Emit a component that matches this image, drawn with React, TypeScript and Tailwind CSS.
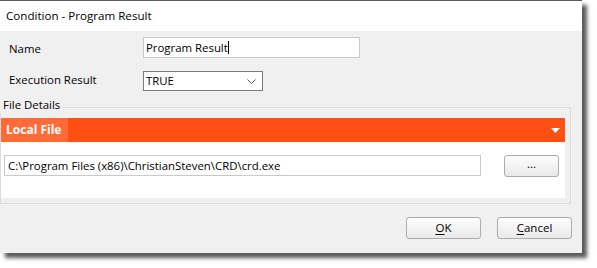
import React from "react";

const font = { fontFamily: '"Segoe UI", "Open Sans", "Noto Sans", sans-serif' };

function WinButton({ children, className = "" }: { children: React.ReactNode; className?: string }) {
  return (
    <button
      className={`h-[22px] rounded-[3px] border border-[#acacac] bg-gradient-to-b from-[#fdfdfd] to-[#e9e9ea] text-[11.5px] text-black flex items-center justify-center ${className}`}
    >
      {children}
    </button>
  );
}

export default function App() {
  return (
    <div className="w-[597px] h-[268px] bg-white overflow-hidden text-black" style={font}>
      <div className="w-[582px] h-[253px] flex flex-col border-t border-[#5d5d5d] shadow-[5px_5px_4px_rgba(0,0,0,0.65)]">
        {/* title bar */}
        <div className="h-[30px] bg-white flex items-center pl-[6px] text-[11.6px] whitespace-nowrap">
          Condition - Program Result
        </div>

        {/* body */}
        <div className="flex-1 bg-[#f0f0f0] flex flex-col text-[11.4px] whitespace-nowrap">
          <div className="mt-[6px] h-[21px] flex items-center">
            <div className="w-[143px] pl-[9px] pt-[3px]">Name</div>
            <div className="w-[217px] h-[21px] bg-white border border-[#c9c9c9] flex items-center pl-[2px]">
              Program Result<span className="w-px h-[13px] bg-black" />
            </div>
          </div>

          <div className="mt-[13px] h-[20px] flex items-center">
            <div className="w-[143px] pl-[9px] pb-[2px]">Execution Result</div>
            <div className="w-[120px] h-[20px] bg-white border border-[#7a7a7a] flex items-center justify-between pl-[2px] pr-[6px]">
              <span>TRUE</span>
              <svg width="9" height="5" viewBox="0 0 9 5" fill="none">
                <path d="M0.5 0.5 L4.5 4.5 L8.5 0.5" stroke="#555" strokeWidth="1" />
              </svg>
            </div>
          </div>

          {/* group box header */}
          <div className="mt-[6px] h-[16px] w-[571px] flex">
            <div className="pl-[3px] pr-[3px] leading-[16px]">File Details</div>
            <div className="flex-1 h-[6px] mt-[10px] border-t border-r border-[#dcdcdc]" />
          </div>

          {/* group box */}
          <div className="w-[571px] border-l border-r border-b border-[#dcdcdc] pt-[5px] pb-[5px] pr-[5px]">
            <div className="h-[24px] bg-[#ff4f12] flex items-center">
              <div className="w-[67px] h-full bg-[#ff6a37] flex items-center pl-[5px] font-bold text-white text-[12px]">
                Local File
              </div>
              <div className="flex-1" />
              <svg width="9" height="5" viewBox="0 0 9 5" className="mr-[5px]">
                <path d="M0 0 L9 0 L4.5 5 Z" fill="#fff" />
              </svg>
            </div>
            <div className="h-[56px] bg-white pt-[13px] pl-[3px] flex">
              <div className="w-[477px] h-[21px] border border-[#c9c9c9] flex items-center pl-[3px]">
                C:\Program Files (x86)\ChristianSteven\CRD\crd.exe
              </div>
              <WinButton className="ml-[23px] w-[55px] h-[21px] pb-[4px]">...</WinButton>
            </div>
          </div>

          {/* footer */}
          <div className="mt-[13px] flex justify-end pr-[10px] gap-[16px]">
            <WinButton className="w-[75px]">
              <span className="underline underline-offset-2">O</span>K
            </WinButton>
            <WinButton className="w-[75px]">
              <span className="underline underline-offset-2">C</span>ancel
            </WinButton>
          </div>
        </div>
      </div>
    </div>
  );
}
